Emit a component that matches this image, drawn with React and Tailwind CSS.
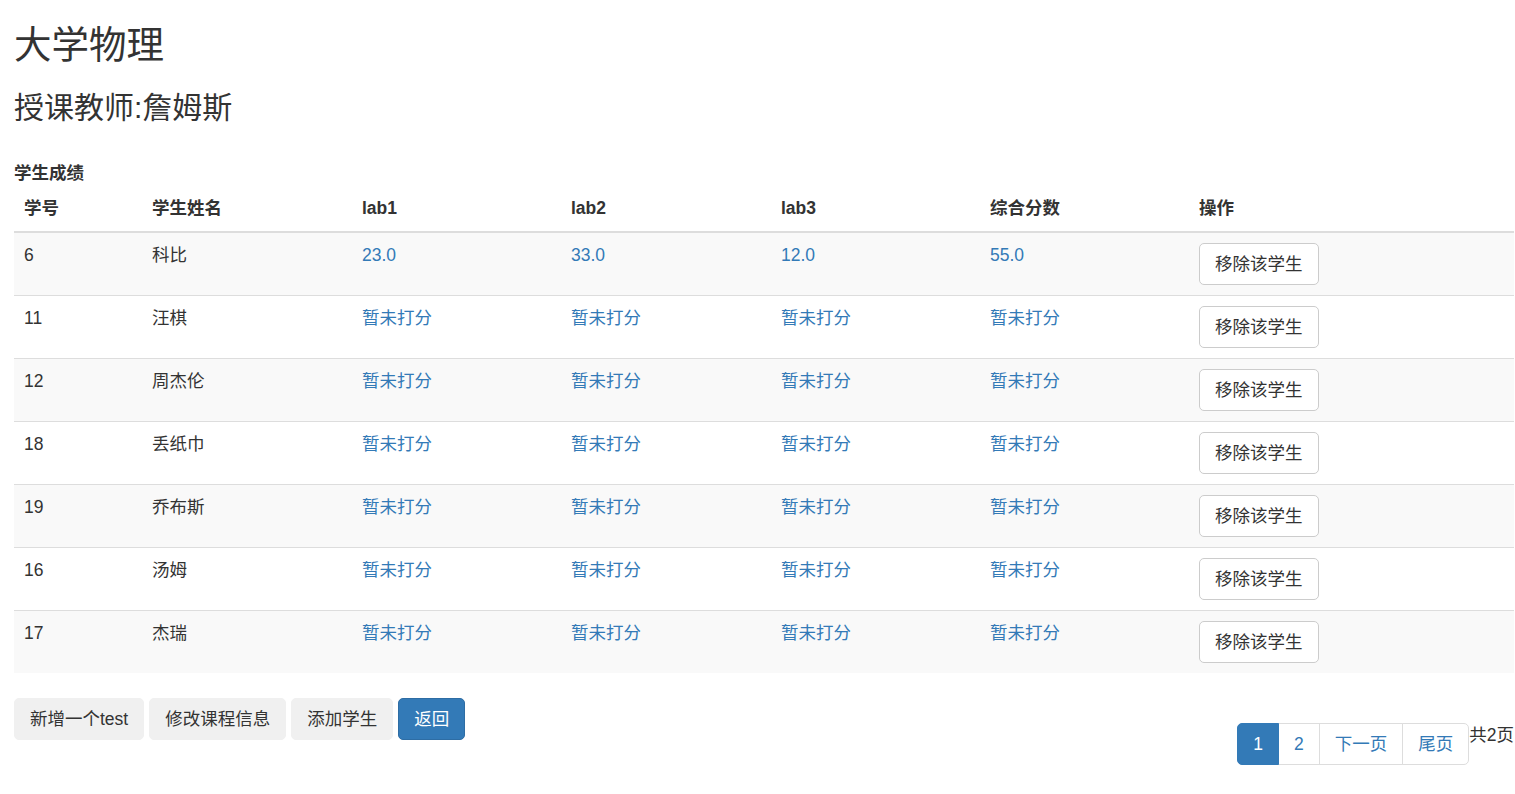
import React from "react";

const rows = [
  { id: "6", name: "科比", s: ["23.0", "33.0", "12.0", "55.0"] },
  { id: "11", name: "汪棋" },
  { id: "12", name: "周杰伦" },
  { id: "18", name: "丢纸巾" },
  { id: "19", name: "乔布斯" },
  { id: "16", name: "汤姆" },
  { id: "17", name: "杰瑞" },
];

const heads = [
  { t: "学号", w: "w-[128px]" },
  { t: "学生姓名", w: "w-[210px]" },
  { t: "lab1", w: "w-[209px]" },
  { t: "lab2", w: "w-[210px]" },
  { t: "lab3", w: "w-[209px]" },
  { t: "综合分数", w: "w-[209px]" },
  { t: "操作", w: "w-[325px]" },
];

export default function App() {
  return (
    <div className="min-h-[794px] bg-white pl-[14px] pr-px text-[17.5px] leading-[25px] text-[#333] font-['Liberation_Sans','Noto_Sans_CJK_SC',sans-serif]">
      <h2 className="pt-[25px] text-[37.5px] leading-[41px] font-normal">大学物理</h2>
      <h3 className="mt-[25px] text-[30px] leading-[33px] font-normal">授课教师:詹姆斯</h3>
      <div className="mt-[37px] font-bold">学生成绩</div>
      <table className="w-[1500px] table-fixed border-collapse">
        <thead>
          <tr>
            {heads.map((h) => (
              <th
                key={h.t}
                className={`${h.w} p-[10px] text-left align-bottom font-bold border-b-2 border-[#ddd]`}
              >
                {h.t}
              </th>
            ))}
          </tr>
        </thead>
        <tbody>
          {rows.map((r, i) => {
            const s = r.s || ["暂未打分", "暂未打分", "暂未打分", "暂未打分"];
            return (
              <tr
                key={r.id}
                className={`${i % 2 === 0 ? "bg-[#f9f9f9]" : "bg-white"} ${i === 0 ? "" : "border-t border-[#ddd]"}`}
              >
                <td className="p-[10px] align-top">{r.id}</td>
                <td className="p-[10px] align-top">{r.name}</td>
                {s.map((v, j) => (
                  <td key={j} className="p-[10px] align-top text-[#337ab7]">
                    {v}
                  </td>
                ))}
                <td className="p-[10px] align-top">
                  <button className="px-[15px] py-[7.5px] leading-[25px] border border-[#ccc] rounded-[5px] bg-white text-[#333]">
                    移除该学生
                  </button>
                </td>
              </tr>
            );
          })}
        </tbody>
      </table>
      <div className="mt-[25px] flex justify-between items-start">
        <div className="flex gap-[5px]">
          <button className="px-[15px] py-[7.5px] leading-[25px] rounded-[5px] border border-[#f0f0f0] bg-[#f0f0f0] text-[#333]">新增一个test</button>
          <button className="px-[15px] py-[7.5px] leading-[25px] rounded-[5px] border border-[#f0f0f0] bg-[#f0f0f0] text-[#333]">修改课程信息</button>
          <button className="px-[15px] py-[7.5px] leading-[25px] rounded-[5px] border border-[#f0f0f0] bg-[#f0f0f0] text-[#333]">添加学生</button>
          <button className="px-[15px] py-[7.5px] leading-[25px] rounded-[5px] border border-[#2e6da4] bg-[#337ab7] text-white">返回</button>
        </div>
        <div className="flex items-start">
          <ul className="mt-[25px] flex">
            <li className="px-[15px] py-[7.5px] leading-[25px] border border-[#337ab7] bg-[#337ab7] text-white rounded-l-[5px] z-10">1</li>
            <li className="-ml-px px-[15px] py-[7.5px] leading-[25px] border border-[#ddd] bg-white text-[#337ab7]">2</li>
            <li className="-ml-px px-[15px] py-[7.5px] leading-[25px] border border-[#ddd] bg-white text-[#337ab7]">下一页</li>
            <li className="-ml-px px-[15px] py-[7.5px] leading-[25px] border border-[#ddd] bg-white text-[#337ab7] rounded-r-[5px]">尾页</li>
          </ul>
          <span className="mt-[25px]">共2页</span>
        </div>
      </div>
    </div>
  );
}
